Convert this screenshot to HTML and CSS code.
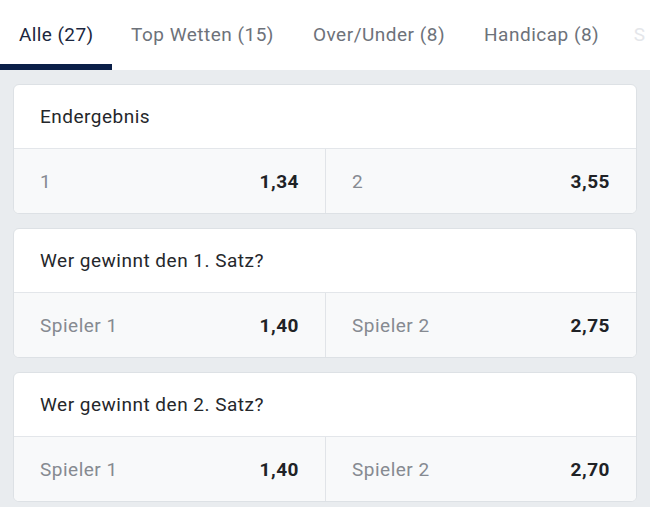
FILE: index.html
```html
<!DOCTYPE html>
<html lang="de">
<head>
<meta charset="utf-8">
<link rel="stylesheet" href="styles.css">
</head>
<body>
<nav class="tabs">
  <div class="tab active">Alle (27)</div>
  <div class="tab">Top Wetten (15)</div>
  <div class="tab">Over/Under (8)</div>
  <div class="tab">Handicap (8)</div>
  <div class="tab faded">S</div>
</nav>
<main class="markets">
  <section class="card">
    <div class="card-title">Endergebnis</div>
    <div class="odds">
      <div class="odd"><span class="label">1</span><span class="value">1,34</span></div>
      <div class="odd"><span class="label">2</span><span class="value">3,55</span></div>
    </div>
  </section>
  <section class="card">
    <div class="card-title">Wer gewinnt den 1. Satz?</div>
    <div class="odds">
      <div class="odd"><span class="label">Spieler 1</span><span class="value">1,40</span></div>
      <div class="odd"><span class="label">Spieler 2</span><span class="value">2,75</span></div>
    </div>
  </section>
  <section class="card">
    <div class="card-title">Wer gewinnt den 2. Satz?</div>
    <div class="odds">
      <div class="odd"><span class="label">Spieler 1</span><span class="value">1,40</span></div>
      <div class="odd"><span class="label">Spieler 2</span><span class="value">2,70</span></div>
    </div>
  </section>
</main>
</body>
</html>
```
FILE: styles.css
```css
* { box-sizing: border-box; }
html, body {
  margin: 0;
  padding: 0;
  background: #e9ecef;
  font-family: Roboto, "Liberation Sans", sans-serif;
  letter-spacing: 0.5px;
  overflow: hidden;
}
.tabs {
  display: flex;
  height: 70px;
  background: #ffffff;
  white-space: nowrap;
  overflow: hidden;
}
.tab {
  flex: none;
  padding: 6px 19.5px 0 19.5px;
  height: 70px;
  line-height: 58px;
  font-size: 19px;
  letter-spacing: 0.5px;
  color: #6d727a;
  border-bottom: 6px solid transparent;
}
.tab.active {
  padding-left: 19px;
  padding-right: 18px;
  letter-spacing: 0.4px;
  color: #1c2740;
  border-bottom-color: #0b1f48;
}
.tab.faded {
  padding-left: 15px;
  padding-right: 0;
  color: #e4e6ea;
}
.markets {
  display: flex;
  flex-direction: column;
  gap: 14px;
  padding: 14px 13px;
}
.card {
  background: #ffffff;
  border: 1px solid #dde1e5;
  border-radius: 6px;
  overflow: hidden;
}
.card-title {
  height: 64px;
  padding: 0 26px;
  display: flex;
  align-items: center;
  font-size: 19px;
  color: #25272b;
  border-bottom: 1px solid #e3e6ea;
}
.odds {
  display: grid;
  grid-template-columns: 1fr 1fr;
  background: #f8f9fa;
}
.odd {
  height: 64px;
  display: flex;
  align-items: center;
  justify-content: space-between;
  padding: 0 26px 0 26px;
  font-size: 19px;
}
.odd + .odd {
  border-left: 1px solid #e1e4e8;
}
.label {
  color: #868a91;
}
.value {
  color: #202226;
  font-weight: 700;
}
```
